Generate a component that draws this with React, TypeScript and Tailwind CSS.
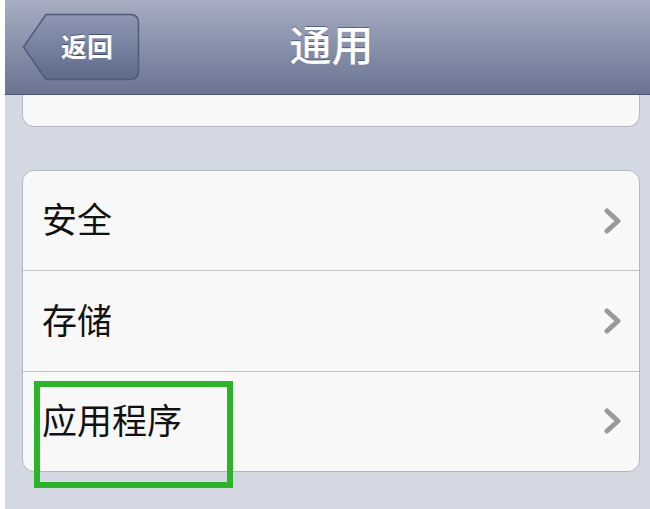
import React from "react";

const rows = ["安全", "存储", "应用程序"];

function Chevron() {
  return (
    <svg width="20" height="26" viewBox="0 0 20 26" className="shrink-0">
      <path
        d="M4 3 L15 13 L4 23"
        fill="none"
        stroke="#999a9c"
        strokeWidth="5"
        strokeLinecap="round"
        strokeLinejoin="round"
      />
    </svg>
  );
}

function BackButton() {
  return (
    <div className="relative w-[118px] h-[68px]">
      <svg width="118" height="68" viewBox="0 0 118 68" className="absolute inset-0">
        <defs>
          <linearGradient id="backGrad" x1="0" y1="0" x2="0" y2="1">
            <stop offset="0" stopColor="#8e98b4" />
            <stop offset="1" stopColor="#5e6a8c" />
          </linearGradient>
        </defs>
        <path
          d="M24 1.5 L108 1.5 Q116.5 1.5 116.5 10 L116.5 58 Q116.5 66.5 108 66.5 L24 66.5 L1.5 34 Z"
          fill="url(#backGrad)"
          stroke="#4f5a78"
          strokeWidth="1.5"
        />
      </svg>
      <span className="absolute inset-0 flex items-center justify-center pl-[12px] pb-[4px] text-white text-[26px] font-semibold [text-shadow:0_-1px_0_rgba(40,50,80,0.6)]">
        返回
      </span>
    </div>
  );
}

export default function App() {
  return (
    <div
      className="w-[650px] h-[509px] flex overflow-hidden"
      style={{ fontFamily: '"Noto Sans CJK SC", "Noto Sans", sans-serif' }}
    >
      <div className="w-[5px] bg-white shrink-0" />
      <div className="relative flex-1 flex flex-col bg-[#d3d8e2]">
        <div className="relative h-[95px] shrink-0 bg-gradient-to-b from-[#a7aec3] to-[#6a7491] border-b border-[#4d566f] flex items-center pl-[17px]">
          <BackButton />
          <div className="absolute inset-0 flex items-center justify-center pl-[8px] pb-[10px] text-white text-[42px] font-medium [text-shadow:0_-1px_0_rgba(50,60,90,0.6)]">
            通用
          </div>
        </div>

        <div className="ml-[17px] mr-[10px] h-[32px] bg-[#f8f8f8] rounded-b-[12px] border border-t-0 border-[#b3b7bf] shrink-0" />

        <div className="mt-[43px] ml-[17px] mr-[10px] h-[302px] bg-[#f8f8f8] rounded-[12px] border border-[#b3b7bf] flex flex-col overflow-hidden">
          {rows.map((label, i) => (
            <div
              key={label}
              className={
                "flex-1 flex items-center justify-between pl-[19px] pr-[16px] " +
                (i < rows.length - 1 ? "border-b border-[#bfc1c5]" : "")
              }
            >
              <span className="text-[35px] text-[#111] pb-[4px]">{label}</span>
              <Chevron />
            </div>
          ))}
        </div>

        <div className="absolute left-[29px] top-[381px] w-[199px] h-[107px] border-[6px] border-[#2db32a]" />
      </div>
    </div>
  );
}
